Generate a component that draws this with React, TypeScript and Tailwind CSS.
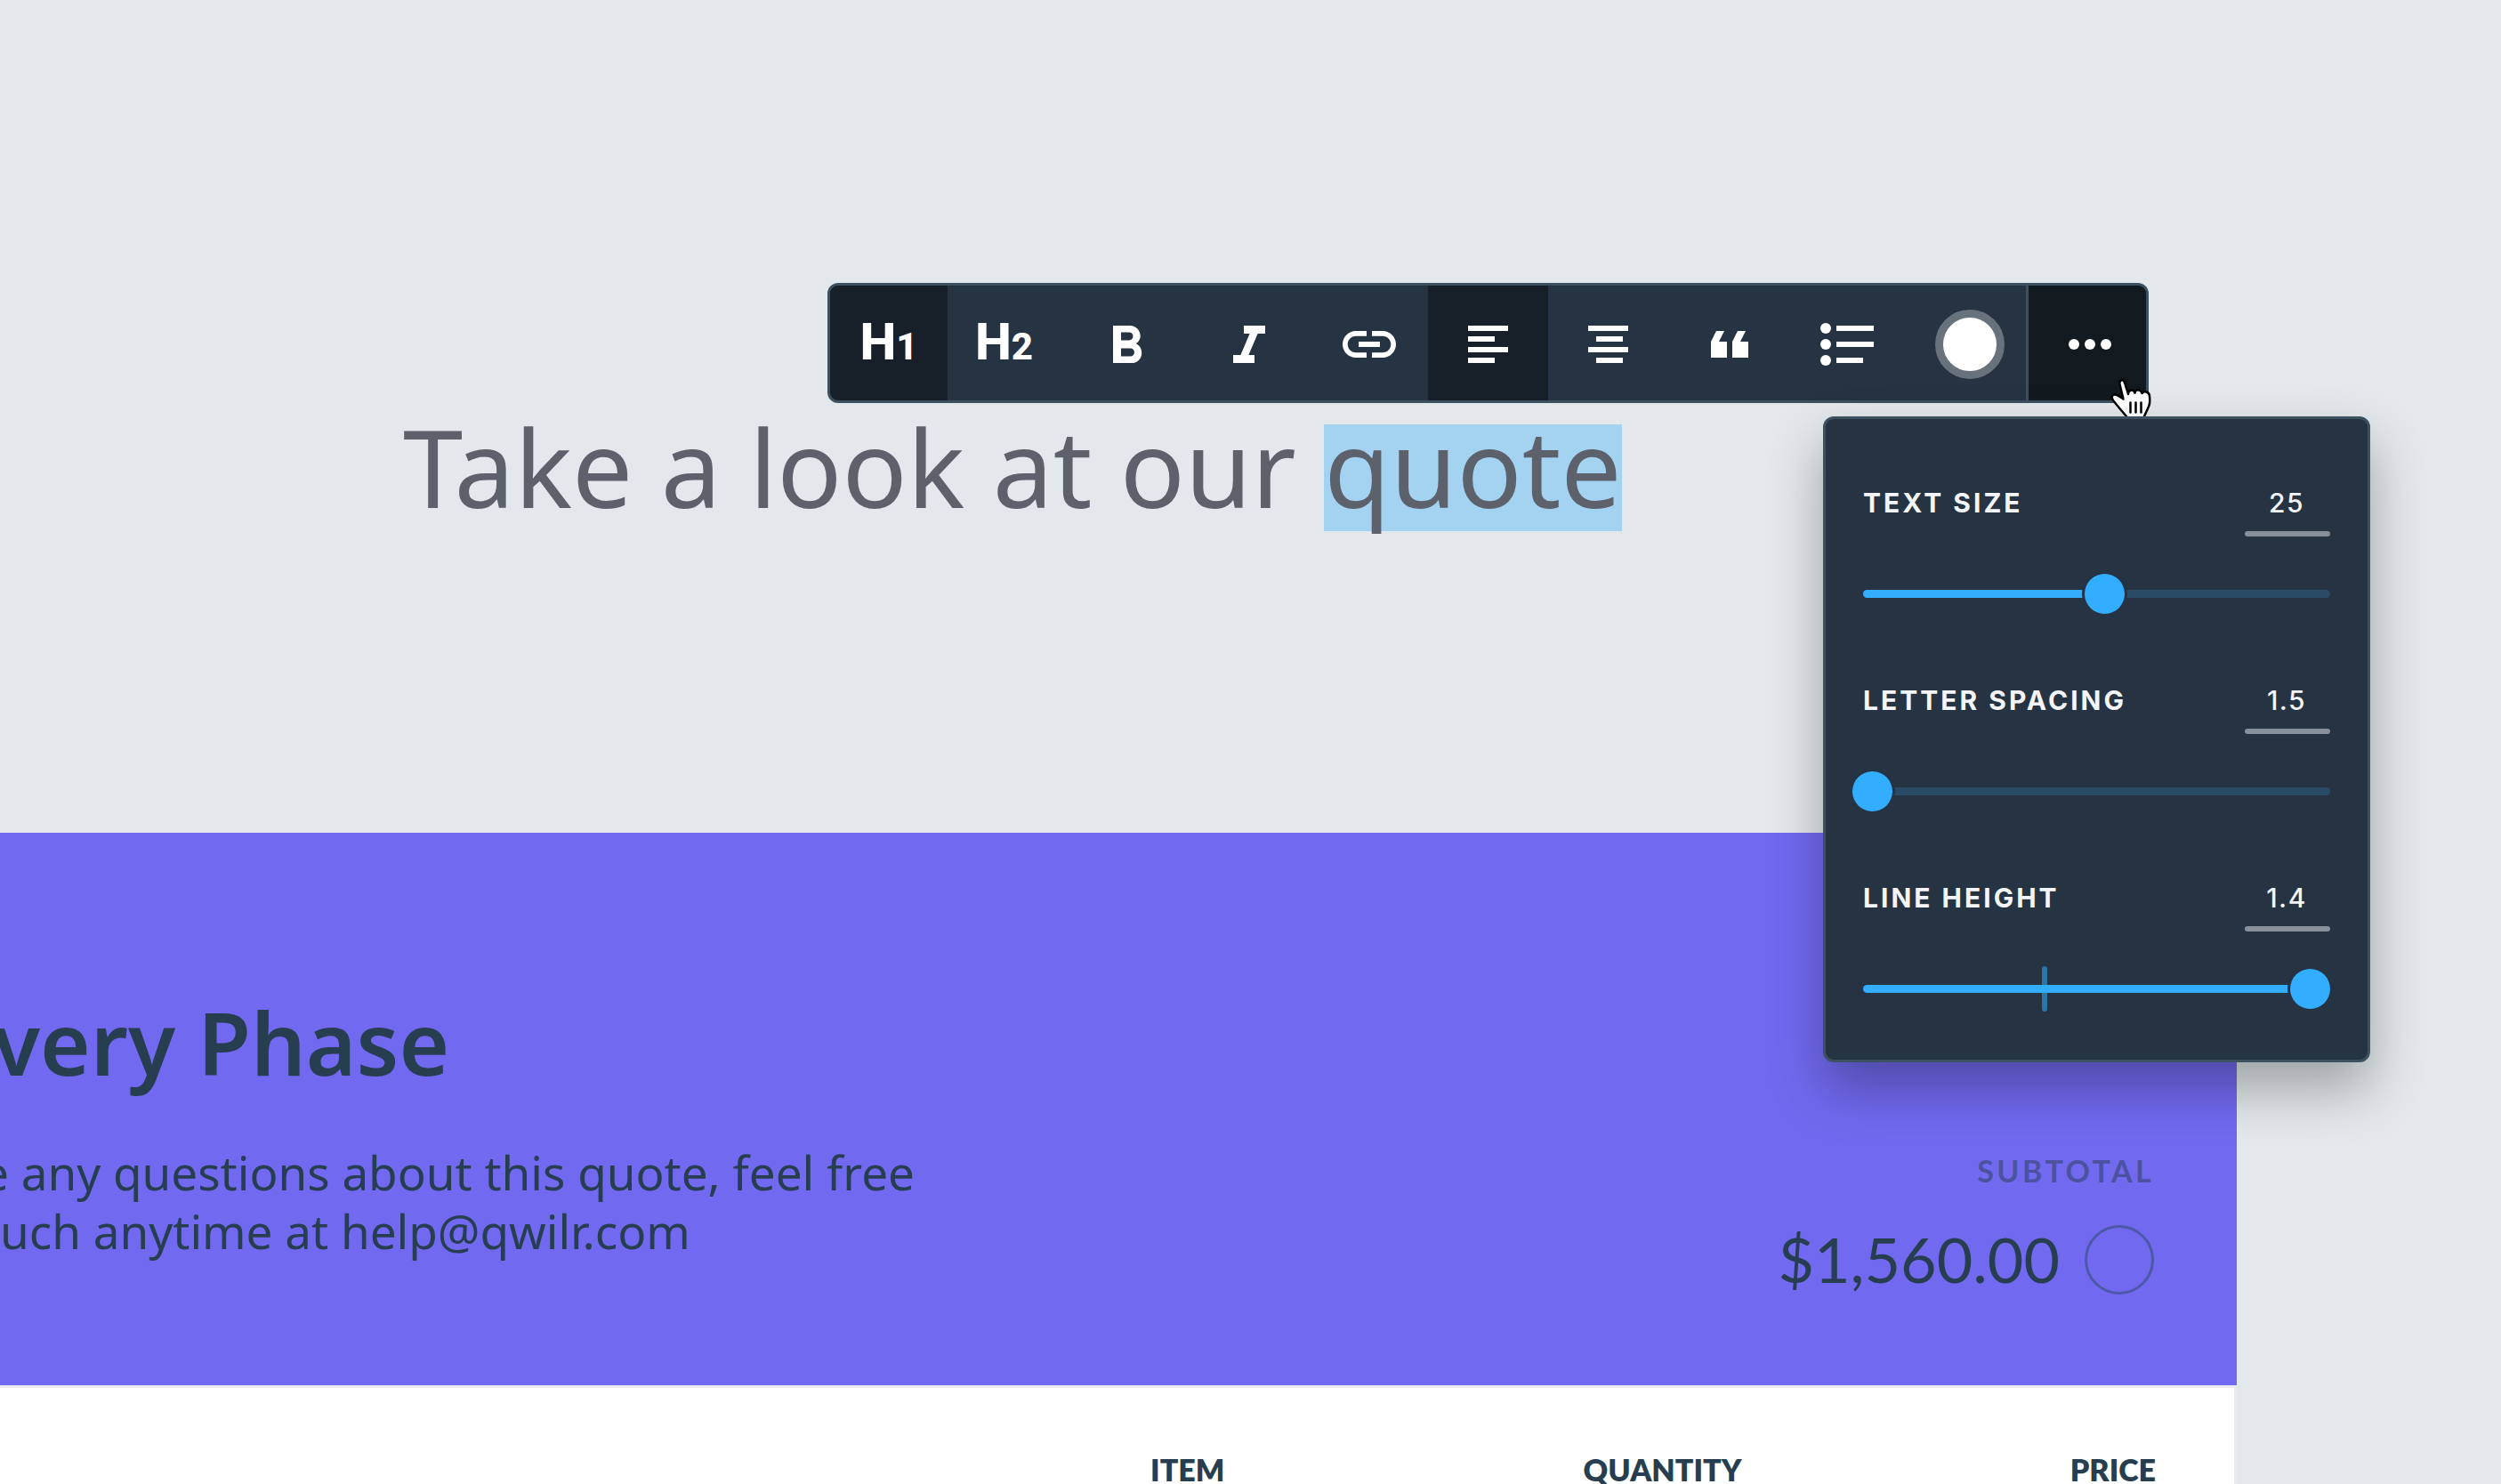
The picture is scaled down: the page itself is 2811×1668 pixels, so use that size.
import { useState } from "react";
import type { ReactNode } from "react";
import { MdFormatBold, MdFormatItalic, MdLink } from "react-icons/md";

function ToolButton({ label, active, children }: { label: string; active?: boolean; children: ReactNode }) {
  return (
    <button
      type="button"
      aria-label={label}
      aria-pressed={!!active}
      className={`flex w-[135px] items-center justify-center pt-[3px] pl-[3px] ${active ? "bg-[#171f28]" : ""}`}
    >
      {children}
    </button>
  );
}

function Glyph({ children }: { children: ReactNode }) {
  return (
    <svg viewBox="0 0 72 72" className="size-[72px]" fill="currentColor" aria-hidden="true">
      {children}
    </svg>
  );
}

function Toolbar() {
  return (
    <div
      role="toolbar"
      aria-label="Text formatting"
      className="flex h-[135px] overflow-hidden rounded-xl border-3 border-[#3d5060] bg-[#263343] font-['Roboto',sans-serif] font-extrabold text-white"
    >
      <button type="button" aria-pressed="true" className="w-[132px] bg-[#171f28] pb-1 text-[58px] leading-none">
        H<span className="text-[42px]">1</span>
      </button>
      <button type="button" className="w-[135px] pr-2 pb-1 text-[58px] leading-none">
        H<span className="text-[42px]">2</span>
      </button>
      <ToolButton label="Bold">
        <MdFormatBold viewBox="1 -1 24 24" className="size-[72px]" />
      </ToolButton>
      <ToolButton label="Italic">
        <MdFormatItalic viewBox="0 -1 24 24" className="size-[72px]" />
      </ToolButton>
      <ToolButton label="Link">
        <MdLink className="size-[72px]" />
      </ToolButton>
      <ToolButton label="Align left" active>
        <Glyph>
          <path d="M12 15h45v6H12zM12 27h30v6H12zM12 39h45v6H12zM12 51h30v6H12z" />
        </Glyph>
      </ToolButton>
      <ToolButton label="Align centre">
        <Glyph>
          <path d="M12 15h45v6H12zM21 27h30v6H21zM12 39h45v6H12zM21 51h30v6H21z" />
        </Glyph>
      </ToolButton>
      <ToolButton label="Quote">
        <Glyph>
          <path d="M15 33l6-12h9l-6 12h9v18H15zM39 33l6-12h9l-6 12h9v18H39z" />
        </Glyph>
      </ToolButton>
      <ToolButton label="Bulleted list">
        <Glyph>
          <circle cx="9" cy="18" r="6" />
          <circle cx="9" cy="36" r="6" />
          <circle cx="9" cy="54" r="6" />
          <path d="M21 15h42v6H21zM21 33h42v6H21zM21 51h30v6H21z" />
        </Glyph>
      </ToolButton>
      <button
        type="button"
        aria-label="Text colour"
        className="flex w-[135px] items-center justify-center border-r-3 border-[#3d5060] pt-[3px] pl-[6px]"
      >
        <span className="size-[78px] rounded-full border-9 border-[#68727d] bg-white" />
      </button>
      <button
        type="button"
        aria-label="More options"
        aria-expanded="true"
        className="flex w-[132px] items-center justify-center bg-[#121a20] pt-[3px] pl-[6px]"
      >
        <Glyph>
          <circle cx="18" cy="36" r="6" />
          <circle cx="36" cy="36" r="6" />
          <circle cx="54" cy="36" r="6" />
        </Glyph>
      </button>
    </div>
  );
}

type SettingProps = {
  id: string;
  label: string;
  min: number;
  max: number;
  step: number;
  initial: number;
  tick?: boolean;
};

function Setting({ id, label, min, max, step, initial, tick }: SettingProps) {
  const [value, setValue] = useState(initial);
  const ratio = (value - min) / (max - min);
  return (
    <div>
      <div className="flex justify-between text-[30px] leading-10">
        <label htmlFor={id} className="font-bold tracking-widest text-[#f3f5f8] uppercase">
          {label}
        </label>
        <div className="w-24">
          <input
            type="text"
            aria-label={`${label} value`}
            value={value}
            onChange={(e) => setValue(Number(e.target.value) || min)}
            className="mb-3 block h-10 w-full bg-transparent pr-0.5 text-center font-medium tracking-wider text-[#f3f5f8] outline-none"
          />
          <div className="h-1.5 rounded-full bg-[#87909b]" />
        </div>
      </div>
      <div className="mt-[42px] grid grid-rows-[45px] items-center">
        {tick && <div className="col-start-1 row-start-1 ml-[201px] h-[51px] w-1.5 rounded-full bg-[#2f74a6]" />}
        <div className={`col-start-1 row-start-1 h-[9px] overflow-hidden rounded-full ${tick ? "" : "bg-[#294b66]"}`}>
          <div className="h-full bg-[#33adff]" style={{ width: `${2 + ratio * 94}%` }} />
        </div>
        <input
          id={id}
          type="range"
          min={min}
          max={max}
          step={step}
          value={value}
          onChange={(e) => setValue(Number(e.target.value))}
          className="col-start-1 row-start-1 -ml-3 h-[45px] appearance-none bg-transparent outline-none [&::-webkit-slider-thumb]:size-[45px] [&::-webkit-slider-thumb]:appearance-none [&::-webkit-slider-thumb]:rounded-full [&::-webkit-slider-thumb]:bg-[#33adff] [&::-webkit-slider-thumb]:shadow-[0_0_0_3px_#263343]"
        />
      </div>
    </div>
  );
}

function HandCursor() {
  return (
    <svg
      viewBox="0 0 48 60"
      className="pointer-events-none absolute top-[106px] right-[-4px] h-[60px] w-[48px]"
      fill="#fff"
      stroke="#000"
      strokeWidth="2.5"
      strokeLinejoin="round"
      strokeLinecap="round"
      aria-hidden="true"
    >
      <path d="M19 44 10.500 34 4 26C1.500 22.500 3 19.500 6 19.500c3 0 6 2.500 9.500 5L11.500 8C10.500 2.500 15.500 1.500 17 6l4 13c-.5-5 6-6 7.500-1.500 .5-4.500 6.500-4.500 8 .500 2-3 8-2 8.500 3 .5 5 .5 9-1 12L39 44v8H23z" />
      <path d="M23.500 28.500v11M29.500 28.500v11M35.500 28.500v11" fill="none" />
    </svg>
  );
}

function SettingsPopover() {
  return (
    <div className="absolute top-[150px] right-[-249px] flex w-[615px] flex-col gap-[77px] rounded-xl border-3 border-[#3d5060] bg-[#263343] px-[42px] pt-[74px] pb-[57px] font-['Inter',sans-serif] shadow-[0_30px_60px_rgba(0,0,0,0.3)]">
      <Setting id="text-size" label="Text size" min={8} max={40} step={1} initial={25} />
      <Setting id="letter-spacing" label="Letter spacing" min={1.5} max={10} step={0.5} initial={1.5} />
      <Setting id="line-height" label="Line height" min={0.8} max={1.4} step={0.1} initial={1.4} tick />
    </div>
  );
}

export default function App() {
  return (
    <div className="h-screen overflow-hidden bg-[#e2e8eb] font-['Noto_Sans',sans-serif] text-[#263e50]">
      <header className="h-[936px] pt-[318px]">
        <div className="relative z-10 ml-[930px] w-fit">
          <Toolbar />
          <HandCursor />
          <SettingsPopover />
        </div>
        <h1 className="mt-6 pl-[453px] text-[121px] leading-[94px] font-normal whitespace-nowrap text-[#5c616b]">
          Take a look at our <mark className="inline-block bg-[#a4d3f2] pb-[26px] text-[#5c616b]">quote</mark>
        </h1>
      </header>

      <main className="mr-[297px]">
        <section className="flex h-[621px] justify-between bg-[#716af0] pr-[93px]">
          <div className="pt-[179px] whitespace-nowrap">
            <h2 className="-ml-2 text-[97px] leading-[112px] font-semibold">very Phase</h2>
            <p className="mt-[58px] text-[53px] leading-[66px]">
              <span className="-ml-5 block">e any questions about this quote, feel free</span>
              uch anytime at <a href="mailto:help@qwilr.com">help@qwilr.com</a>
            </p>
          </div>
          <div className="flex flex-col items-end pt-[360px] font-['Lato',sans-serif]">
            <p className="text-[34px] leading-10 font-bold tracking-widest opacity-50">SUBTOTAL</p>
            <div className="mt-[41px] flex items-center gap-7">
              <label htmlFor="include" className="pb-0.5 text-[70px] leading-[74px]">
                $1,560.00
              </label>
              <input
                id="include"
                type="checkbox"
                className="size-[78px] appearance-none rounded-full border-3 border-[#4c58a8]"
              />
            </div>
          </div>
        </section>
        <table className="w-full table-fixed border-t-3 border-r-3 border-[#e8ecee] bg-white font-['Lato',sans-serif] text-[34px] leading-10">
          <thead>
            <tr>
              <th className="h-[240px] pt-[72px] text-right align-top font-extrabold">ITEM</th>
              <th className="w-[581px] pt-[72px] text-right align-top font-extrabold">QUANTITY</th>
              <th className="w-[555px] pt-[72px] pr-[88px] text-right align-top font-extrabold">PRICE</th>
            </tr>
          </thead>
        </table>
      </main>
    </div>
  );
}
